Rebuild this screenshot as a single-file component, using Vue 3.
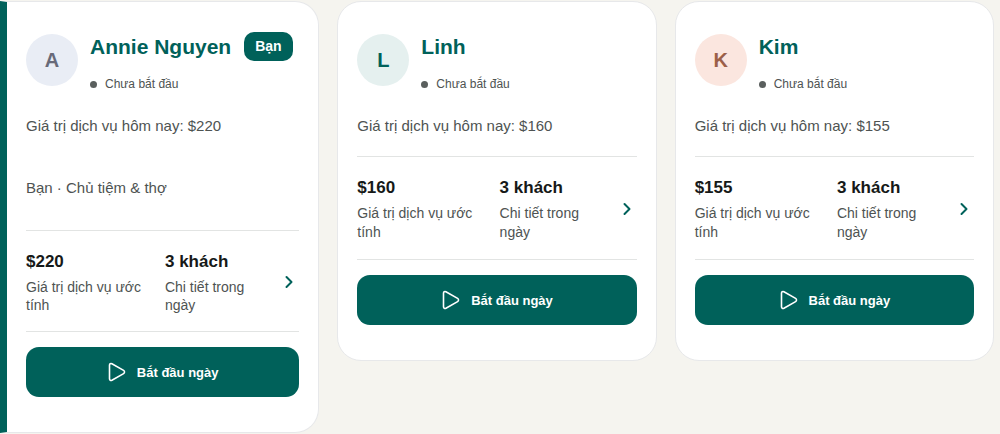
<script setup>
const staff = [
  { name: 'Annie Nguyen', initial: 'A', tone: 'slate', amount: '$220', guests: '3 khách', own: true },
  { name: 'Linh', initial: 'L', tone: 'mint', amount: '$160', guests: '3 khách', own: false },
  { name: 'Kim', initial: 'K', tone: 'peach', amount: '$155', guests: '3 khách', own: false },
]
</script>

<template>
  <main class="board">
    <article v-for="person in staff" :key="person.name" class="card" :class="{ own: person.own }">
      <header class="head">
        <span class="avatar" :class="person.tone" aria-hidden="true">{{ person.initial }}</span>
        <div class="who">
          <div class="name-row">
            <h2 class="name">{{ person.name }}</h2>
            <span v-if="person.own" class="badge">Bạn</span>
          </div>
          <p class="status"><span class="dot"></span>Chưa bắt đầu</p>
        </div>
      </header>

      <p class="today">Giá trị dịch vụ hôm nay: {{ person.amount }}</p>
      <p v-if="person.own" class="role">Bạn · Chủ tiệm &amp; thợ</p>

      <button type="button" class="details">
        <span class="stat">
          <strong class="value">{{ person.amount }}</strong>
          <span class="label">Giá trị dịch vụ ước tính</span>
        </span>
        <span class="stat">
          <strong class="value">{{ person.guests }}</strong>
          <span class="label">Chi tiết trong ngày</span>
        </span>
        <svg class="chevron" viewBox="0 0 20 20" aria-hidden="true">
          <path d="M7.5 5 L12.5 10 L7.5 15" />
        </svg>
      </button>

      <button type="button" class="start">
        <svg class="play" viewBox="0 0 20 20" aria-hidden="true">
          <path d="M2.5 3.2 V16.8 C2.5 18.2 3.7 18.8 4.9 18.2 L16.6 11.6 C17.8 10.9 17.8 9.1 16.6 8.4 L4.9 1.8 C3.7 1.2 2.5 1.8 2.5 3.2 Z" />
        </svg>
        Bắt đầu ngày
      </button>
    </article>
  </main>
</template>

<style>
body {
  margin: 0;
  background: #f5f4ef;
}
</style>

<style scoped>
.board {
  display: grid;
  grid-template-columns: repeat(3, minmax(0, 1fr));
  align-items: start;
  gap: 18px;
  padding: 1px 6px 0 0;
  font-family: "Liberation Sans", Arial, sans-serif;
  color: #4e5352;
}

.card {
  box-sizing: border-box;
  padding: 30px 19px 35px;
  background: #fff;
  border: 1px solid #e7e8ea;
  border-radius: 24px;
}

.card.own {
  border-left: 7px solid #00615a;
  border-radius: 0 24px 24px 0;
}

.head {
  display: flex;
  align-items: flex-start;
  gap: 12px;
}

.avatar {
  display: flex;
  flex: none;
  align-items: center;
  justify-content: center;
  width: 52px;
  height: 52px;
  margin-top: 2px;
  border-radius: 50%;
  font-size: 20px;
  font-weight: 700;
}

.slate {
  background: #e9edf5;
  color: #686a79;
}

.mint {
  background: #e5f0ef;
  color: #00615a;
}

.peach {
  background: #fbe6df;
  color: #9c5f48;
}

.name-row {
  display: flex;
  align-items: center;
  gap: 13px;
  height: 29px;
}

.name {
  margin: 0;
  font-size: 21px;
  line-height: 29px;
  font-weight: 700;
  color: #00615a;
  white-space: nowrap;
}

.badge {
  padding: 0 11px;
  border-radius: 10px;
  background: #00615a;
  color: #fff;
  font-size: 14px;
  line-height: 29px;
  font-weight: 700;
}

.status {
  display: flex;
  align-items: center;
  gap: 8px;
  margin: 14px 0 0;
  font-size: 12px;
  line-height: 19px;
}

.dot {
  width: 7px;
  height: 7px;
  border-radius: 50%;
  background: #5a5f5e;
}

.today,
.role {
  margin: 21px 0 0;
  font-size: 15px;
  line-height: 22px;
}

.role {
  margin: 40px 0 31px;
}

.details {
  display: grid;
  grid-template-columns: 5fr 4fr 20px;
  align-items: center;
  gap: 16px;
  width: 100%;
  margin: 19px 0 0;
  padding: 19px 0 17px;
  border: 0;
  border-top: 1px solid #e2e4e3;
  border-bottom: 1px solid #e2e4e3;
  background: none;
  font: inherit;
  color: inherit;
  text-align: left;
  cursor: pointer;
}

.stat {
  display: flex;
  flex-direction: column;
  gap: 4px;
}

.value {
  font-size: 17px;
  line-height: 24px;
  color: #161918;
}

.label {
  font-size: 14px;
  line-height: 19px;
}

.own .label {
  line-height: 18px;
}

.chevron {
  width: 20px;
  height: 20px;
  fill: none;
  stroke: #00615a;
  stroke-width: 2;
  stroke-linecap: round;
  stroke-linejoin: round;
}

.start {
  display: flex;
  align-items: center;
  justify-content: center;
  gap: 10px;
  width: 100%;
  height: 50px;
  margin-top: 15px;
  padding: 0;
  border: 0;
  border-radius: 13px;
  background: #00615a;
  color: #fff;
  font: inherit;
  font-size: 13px;
  font-weight: 700;
  cursor: pointer;
}

.play {
  width: 20px;
  height: 20px;
  fill: none;
  stroke: currentColor;
  stroke-width: 1.6;
  stroke-linejoin: round;
}
</style>
